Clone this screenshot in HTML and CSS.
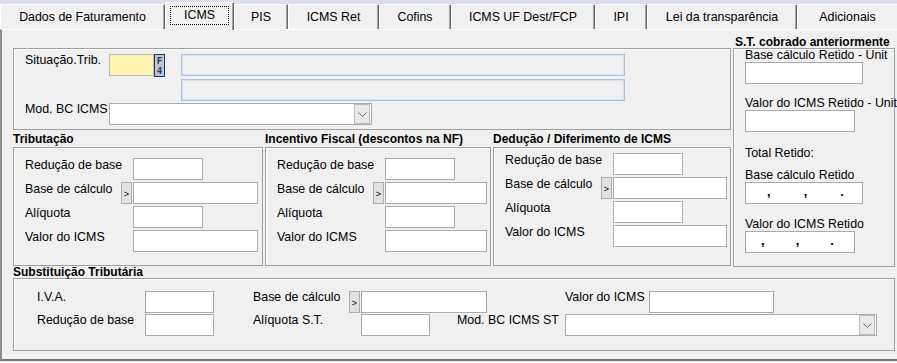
FILE: index.html
```html
<!DOCTYPE html>
<html lang="pt-BR">
<head>
    <meta charset="UTF-8">
    <meta name="viewport" content="width=device-width, initial-scale=1.0">
    <title>ICMS</title>
    <link rel="stylesheet" href="styles.css">
</head>
<body>
    <div class="tabbar">
        <div class="tab t-dados">Dados de Faturamento</div>
        <div class="tab active t-icms"><span class="focus">ICMS</span></div>
        <div class="tab t-pis">PIS</div>
        <div class="tab t-ret">ICMS Ret</div>
        <div class="tab t-cofins">Cofins</div>
        <div class="tab t-uf">ICMS UF Dest/FCP</div>
        <div class="tab t-ipi">IPI</div>
        <div class="tab t-lei">Lei da transparência</div>
        <div class="tab t-adic">Adicionais</div>
    </div>

    <div class="panel">
        <div class="upper">
            <div class="left-col">
                <div class="group top-group">
                    <div class="row">
                        <label class="lbl">Situação.Trib.</label>
                        <input class="field sit" type="text">
                        <span class="f4"><b>F</b><b>4</b></span>
                        <input class="field desc" type="text">
                    </div>
                    <div class="row">
                        <input class="field desc indent" type="text">
                    </div>
                    <div class="row">
                        <label class="lbl">Mod. BC ICMS</label>
                        <div class="field select w263">
                            <span class="drop"><svg width="9" height="5" viewBox="0 0 9 5"><path d="M0.5 0.5 L4.5 4.5 L8.5 0.5" fill="none" stroke="#6b6b6b"/></svg></span>
                        </div>
                    </div>
                </div>

                <div class="groups">
                    <div class="gcol trib">
                        <div class="gtitle">Tributação</div>
                        <div class="group calc">
                            <label>Redução de base</label><input class="field w70" type="text">
                            <label>Base de cálculo</label><span class="btn">&gt;</span><input class="field w125" type="text">
                            <label>Alíquota</label><input class="field w70" type="text">
                            <label>Valor do ICMS</label><input class="field w125" type="text">
                        </div>
                    </div>
                    <div class="gcol inc">
                        <div class="gtitle">Incentivo Fiscal (descontos na NF)</div>
                        <div class="group calc">
                            <label>Redução de base</label><input class="field w70" type="text">
                            <label>Base de cálculo</label><span class="btn">&gt;</span><input class="field w102" type="text">
                            <label>Alíquota</label><input class="field w70" type="text">
                            <label>Valor do ICMS</label><input class="field w102" type="text">
                        </div>
                    </div>
                    <div class="gcol ded">
                        <div class="gtitle">Dedução / Diferimento de ICMS</div>
                        <div class="group calc">
                            <label>Redução de base</label><input class="field w70" type="text">
                            <label>Base de cálculo</label><span class="btn">&gt;</span><input class="field w114" type="text">
                            <label>Alíquota</label><input class="field w70" type="text">
                            <label>Valor do ICMS</label><input class="field w114" type="text">
                        </div>
                    </div>
                </div>
            </div>

            <div class="right-col">
                <div class="gtitle st-title">S.T. cobrado anteriormente</div>
                <div class="group st-box">
                    <label class="st1">Base cálculo Retido - Unit</label>
                    <input class="field w118" type="text">
                    <label class="st2">Valor do ICMS Retido - Unit</label>
                    <input class="field w110" type="text">
                    <label class="st3">Total Retido:</label>
                    <label class="st4">Base cálculo Retido</label>
                    <div class="field w118 mask m1"><i>,</i><i>,</i><i>.</i></div>
                    <label class="st5">Valor do ICMS Retido</label>
                    <div class="field w110 mask m2"><i>,</i><i>,</i><i>.</i></div>
                </div>
            </div>
        </div>

        <div class="gtitle sub-title">Substituição Tributária</div>
        <div class="group sub">
            <div class="srow">
                <label class="lbl w108">I.V.A.</label>
                <input class="field w69" type="text">
                <label class="lbl w96 ml39">Base de cálculo</label>
                <span class="btn">&gt;</span>
                <input class="field w126" type="text">
                <label class="lbl w84 ml78">Valor do ICMS</label>
                <input class="field w125" type="text">
            </div>
            <div class="srow">
                <label class="lbl w108">Redução de base</label>
                <input class="field w69" type="text">
                <label class="lbl w108 ml39">Alíquota S.T.</label>
                <input class="field w69" type="text">
                <label class="lbl w108 ml27">Mod. BC ICMS ST</label>
                <div class="field select w312">
                    <span class="drop"><svg width="9" height="5" viewBox="0 0 9 5"><path d="M0.5 0.5 L4.5 4.5 L8.5 0.5" fill="none" stroke="#6b6b6b"/></svg></span>
                </div>
            </div>
        </div>
    </div>
</body>
</html>
```

FILE: styles.css
```css
* {
    box-sizing: border-box;
}
body {
    margin: 0;
    background: #f0f0f0;
    font-family: "Liberation Sans", Arial, sans-serif;
    font-size: 12.4px;
    color: #000;
    overflow: hidden;
}

/* tabs */
.tabbar {
    display: flex;
    align-items: flex-end;
    height: 29px;
    background: #dadeef;
}
.tab {
    height: 25px;
    line-height: 24px;
    text-align: center;
    white-space: nowrap;
    background: #f0f0f0;
    border-top: 1px solid #fff;
    border-left: 1px solid #fff;
    border-right: 1px solid #696969;
    box-shadow: inset -1px 0 0 #a0a0a0;
}
.tab.active {
    height: 28px;
    margin-bottom: -1px;
    position: relative;
    z-index: 1;
    display: flex;
    justify-content: center;
    padding-top: 3px;
}
.focus {
    display: block;
    width: 59px;
    height: 19px;
    line-height: 17px;
    border: 1px dotted #000;
    text-align: center;
}
.t-dados { width: 165px; }
.t-icms { width: 69px; }
.t-pis { width: 54px; }
.t-ret { width: 91px; }
.t-cofins { width: 72px; }
.t-uf { width: 144px; }
.t-ipi { width: 52px; }
.t-lei { width: 150px; }
.t-adic { width: 100px; border-right: none; box-shadow: none; }

/* panel */
.panel {
    height: 332px;
    border-top: 1px solid #fff;
    border-left: 2px solid #8c8c8c;
    border-bottom: 2px solid #747474;
    padding-left: 11px;
}
.upper {
    display: flex;
    gap: 2px;
    align-items: flex-start;
}
.left-col {
    width: 718px;
    padding-top: 18px;
}
.right-col {
    width: 162px;
    padding-top: 6px;
}
.group {
    border: 1px solid #a0a0a0;
    box-shadow: inset 1px 1px 0 #fff;
}
.gtitle {
    font-weight: bold;
    font-size: 12px;
    line-height: 15px;
    white-space: nowrap;
}

/* fields */
.field {
    display: block;
    height: 22px;
    margin: 0;
    padding: 0;
    border: 1px solid #ababab;
    background: #fff;
    font: inherit;
}
.select {
    display: flex;
    justify-content: flex-end;
}
.drop {
    width: 16px;
    height: 20px;
    margin-right: 1px;
    border: 1px solid #bdbdbd;
    background: #e9e9e9;
    display: flex;
    align-items: center;
    justify-content: center;
}
.btn {
    width: 11px;
    height: 22px;
    margin-right: 1px;
    border: 1px solid #adadad;
    background: #e1e1e1;
    font-size: 9px;
    display: flex;
    align-items: center;
    justify-content: center;
    padding-top: 2px;
}
.w69 { width: 69px; }
.w70 { width: 70px; }
.w102 { width: 102px; }
.w110 { width: 110px; }
.w114 { width: 114px; }
.w118 { width: 118px; }
.w125 { width: 125px; }
.w126 { width: 126px; }
.w263 { width: 263px; }
.w312 { width: 312px; }

/* situacao */
.top-group {
    height: 82px;
    padding: 5px 0 0 11px;
}
.top-group .row {
    display: flex;
    margin-bottom: 2px;
}
.top-group .lbl {
    width: 84px;
    line-height: 13px;
}
.sit {
    width: 45px;
    background: #fff4b2;
    border-color: #b8b8b8;
}
.f4 {
    width: 11px;
    height: 23px;
    border: 1px solid #143e6e;
    background: #c4c4c4;
    color: #143e6e;
    display: flex;
    flex-direction: column;
    align-items: center;
    justify-content: center;
    font: bold 9px/10px "DejaVu Sans Mono", monospace;
}
.f4 b {
    display: block;
    height: 10px;
}
.desc {
    width: 444px;
    margin-left: 16px;
    background: #f0f0f0;
    border-color: #a9c3e1;
    box-shadow: inset 0 0 0 1px #d3e1f1;
}
.desc.indent {
    margin-left: 156px;
}

/* three calc groups */
.groups {
    display: flex;
    gap: 2px;
}
.groups .gtitle {
    margin-top: 2px;
}
.trib { width: 250px; }
.inc { width: 226px; }
.ded { width: 238px; }
.calc {
    height: 119px;
    display: grid;
    grid-template-columns: 96px 12px auto;
    grid-auto-rows: 22px;
    row-gap: 2px;
    align-content: start;
    padding: 10px 0 0 11px;
}
.ded .calc {
    padding-top: 5px;
}
.calc label {
    grid-column: 1;
    line-height: 15px;
    white-space: nowrap;
}
.calc input {
    grid-column: 3;
}

/* S.T. cobrado anteriormente */
.st-title {
    line-height: 12px;
    padding-left: 2px;
}
.st-box {
    height: 219px;
    display: flex;
    flex-direction: column;
    align-items: flex-start;
    padding-left: 11px;
}
.st-box label {
    line-height: 13px;
    white-space: nowrap;
}
.st2 { margin-top: 13px; }
.st3 { margin-top: 15px; }
.st4 { margin-top: 9px; }
.st5 { margin-top: 14px; }
.mask {
    display: flex;
    font-weight: bold;
    font-size: 13px;
    line-height: 18px;
}
.mask i {
    font-style: normal;
}
.m1 { padding-left: 21px; gap: 33px; }
.m2 { padding-left: 15px; gap: 31px; }

/* substituicao */
.sub-title {
    line-height: 11px;
}
.sub {
    width: 882px;
    height: 73px;
    padding: 12px 0 0 23px;
}
.srow {
    display: flex;
    margin-bottom: 1px;
}
.srow .lbl {
    line-height: 13px;
    white-space: nowrap;
}
.w84 { width: 84px; }
.w96 { width: 96px; }
.w108 { width: 108px; }
.ml27 { margin-left: 27px; }
.ml39 { margin-left: 39px; }
.ml78 { margin-left: 78px; }
```
